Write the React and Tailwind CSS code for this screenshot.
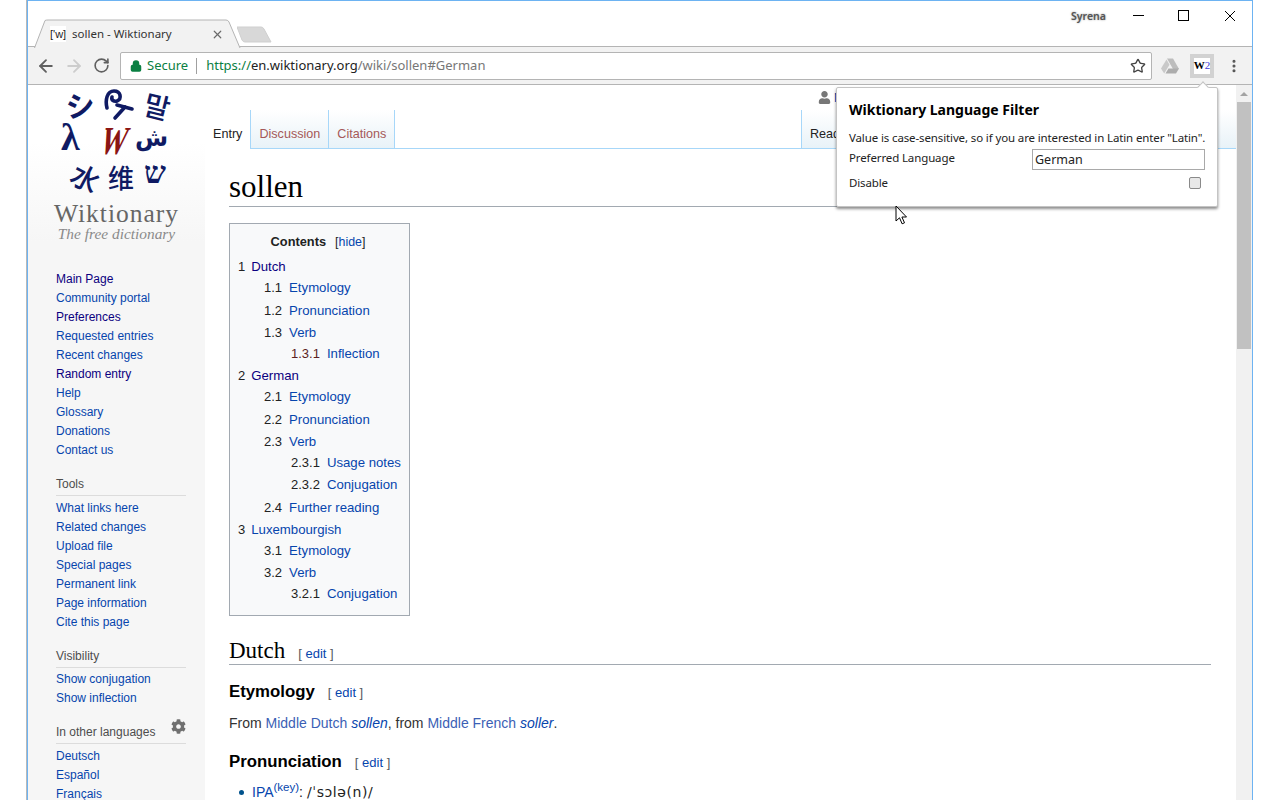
import React from "react";
import { ArrowLeft, ArrowRight, RotateCw, Lock, Star, X, EllipsisVertical } from "lucide-react";
import { FaUser, FaCog } from "react-icons/fa";

const uiFont = "font-['Noto_Sans',sans-serif]";

const sidebarMain = [
  ["Main Page", "#0b0080"],
  ["Community portal", "#0645ad"],
  ["Preferences", "#0b0080"],
  ["Requested entries", "#0645ad"],
  ["Recent changes", "#0645ad"],
  ["Random entry", "#0b0080"],
  ["Help", "#0645ad"],
  ["Glossary", "#0645ad"],
  ["Donations", "#0645ad"],
  ["Contact us", "#0645ad"],
];
const sidebarTools = ["What links here", "Related changes", "Upload file", "Special pages", "Permanent link", "Page information", "Cite this page"];
const sidebarVisibility = ["Show conjugation", "Show inflection"];
const sidebarLangs = ["Deutsch", "Español", "Français"];

// level, number, label, visited, row height
const toc = [
  [0, "1", "Dutch", true, "h-[21px]"],
  [1, "1.1", "Etymology", false, "h-[23px]"],
  [1, "1.2", "Pronunciation", false, "h-[22px]"],
  [1, "1.3", "Verb", false, "h-[21px]"],
  [2, "1.3.1", "Inflection", false, "h-[22px]"],
  [0, "2", "German", true, "h-[21px]"],
  [1, "2.1", "Etymology", false, "h-[23px]"],
  [1, "2.2", "Pronunciation", false, "h-[22px]"],
  [1, "2.3", "Verb", false, "h-[21px]"],
  [2, "2.3.1", "Usage notes", false, "h-[22px]"],
  [2, "2.3.2", "Conjugation", false, "h-[23px]"],
  [1, "2.4", "Further reading", false, "h-[22px]"],
  [0, "3", "Luxembourgish", false, "h-[21px]"],
  [1, "3.1", "Etymology", false, "h-[22px]"],
  [1, "3.2", "Verb", false, "h-[21px]"],
  [2, "3.2.1", "Conjugation", false, "h-[20px]"],
];

const SideLink = ({ children, color = "#0645ad" }) => (
  <li className="h-[19px] leading-[19px]" style={{ color }}>{children}</li>
);

const SideHead = ({ children }) => (
  <div className="mr-[19px] h-[22px] border-b border-[#dcdcdc] leading-[20px] text-[#4d4d4d]">{children}</div>
);

const Edit = () => (
  <span className="ml-[13px] align-baseline text-[13px] font-normal text-[#54595d]">
    [ <span className="text-[#0645ad]">edit</span> ]
  </span>
);

const Logo = () => (
  <svg width="177" height="160" viewBox="0 0 177 160" className="block">
    <g fill="#0f1a63" fontFamily="'Noto Sans CJK JP', sans-serif" fontWeight="700">
      <text transform="translate(39 33) rotate(-6)" fontSize="29">シ</text>
      <g fill="none" stroke="#0f1a63" strokeWidth="3.6" strokeLinecap="round">
        <path d="M79 23C77 15 79 6 86 6C93 6 94 14 89 16C86 17 83 15 84 12" />
        <path d="M89 20l15 4" />
        <path d="M97 22l-10 11" />
      </g>
      <text transform="translate(114 29) rotate(14)" fontSize="28" fontFamily="'Noto Sans CJK KR', sans-serif" fontWeight="500">말</text>
      <text x="33" y="65" fontSize="38" fontFamily="'Liberation Serif', serif" fontWeight="700">λ</text>
      <text transform="translate(70 69) skewX(-16) scale(0.72 1.1)" fontSize="36" fontFamily="'Liberation Serif', serif" fontWeight="700" fill="#8b1513">W</text>
      <text x="107" y="61" fontSize="24" fontFamily="'DejaVu Sans', sans-serif" fontWeight="700">ش</text>
      <text transform="translate(40 96) rotate(28)" fontSize="28" fontWeight="500">水</text>
      <text x="80" y="103" fontSize="26" fontFamily="'Noto Sans CJK SC', sans-serif" fontWeight="500">维</text>
      <text x="116" y="98" fontSize="31" fontFamily="'Liberation Serif', serif" fontWeight="700">ש</text>
    </g>
    <text x="88.5" y="137" textAnchor="middle" fontFamily="'Liberation Serif', serif" fontSize="25.5" fill="#666" letterSpacing="1">Wiktionary</text>
    <text x="88.5" y="154" textAnchor="middle" fontFamily="'Liberation Serif', serif" fontStyle="italic" fontSize="15.4" fill="#8a8a8a">The free dictionary</text>
  </svg>
);

const Sidebar = () => (
  <div className="relative w-[177px] shrink-0 bg-gradient-to-b from-white from-[8%] to-[#f6f6f6] to-[22%] font-['Liberation_Sans',sans-serif] text-[12px]">
    <div className="absolute inset-x-0 top-[160px] bottom-0 bg-[#f6f6f6]" />
    <div className="relative">
      <Logo />
      <div className="pl-[28px] pt-[25px]">
        <ul>
          {sidebarMain.map(([t, c]) => <SideLink key={t} color={c}>{t}</SideLink>)}
        </ul>
        <div className="mt-[14px]">
          <SideHead>Tools</SideHead>
          <ul className="mt-[3px]">{sidebarTools.map((t) => <SideLink key={t}>{t}</SideLink>)}</ul>
        </div>
        <div className="mt-[14px]">
          <SideHead>Visibility</SideHead>
          <ul className="mt-[2px]">{sidebarVisibility.map((t) => <SideLink key={t}>{t}</SideLink>)}</ul>
        </div>
        <div className="relative mt-[14px]">
          <SideHead>In other languages</SideHead>
          <FaCog className="absolute right-[19px] top-[-3px] text-[15px] text-[#707070]" />
          <ul className="mt-[3px]">{sidebarLangs.map((t) => <SideLink key={t}>{t}</SideLink>)}</ul>
        </div>
      </div>
    </div>
  </div>
);

const Toc = () => (
  <div className="w-[181px] border border-[#a2a9b1] bg-[#f8f9fa] pl-[8px] pt-[7px] text-[13px] text-[#222]">
    <div className="flex h-[22px] justify-center gap-[9px] pr-[11px] leading-[22px]">
      <b className="text-[12.8px]">Contents</b>
      <span className="text-[12.4px]">[<span className="text-[#0645ad]">hide</span>]</span>
    </div>
    <div className="pb-[11px] pt-[4px]">
      {toc.map(([level, num, label, visited, height]) => (
        <div
          key={num}
          className={`${height} whitespace-nowrap leading-[20px] ${level === 1 ? "pl-[26px]" : level === 2 ? "pl-[53px]" : ""}`}
        >
          <span className={num === "1.3.1" ? "text-[#5c1f1f]" : ""}>{num}</span>
          <span className={`text-[13.2px] ${level === 0 ? "ml-[6px]" : "ml-[7px]"} ${visited ? "text-[#0b0080]" : "text-[#0645ad]"}`}>{label}</span>
        </div>
      ))}
    </div>
  </div>
);

const Article = () => (
  <div className="relative min-w-0 flex-1 overflow-hidden bg-white font-['Liberation_Sans',sans-serif]">
    {/* personal bar and search edge, mostly hidden by the popup */}
    <span className="absolute left-[1009px] top-[12px] h-[9px] w-[2px] bg-[#0645ad]" />
    <span className="absolute left-[1010px] top-[34px] h-[26px] w-[1px] bg-[#aaaaaa]" />
    <div className="flex h-[25px] items-center pl-[613px] text-[12px] text-[#0645ad]">
      <FaUser className="mr-[3px] text-[13px] text-[#777]" />
      <span>N</span>
    </div>
    <div className="flex h-[39px] justify-between text-[12.6px]">
      <div className="flex flex-1 border-b border-[#a7d7f9]">
        <div className="flex bg-gradient-to-b from-white to-[#e8f2f8]">
          <div className="-mb-px border-r border-[#a7d7f9] bg-white pl-[8px] pr-[8px] pt-[15px] text-[#222]">Entry</div>
          <div className="border-r border-[#a7d7f9] px-[8px] pt-[15px] text-[#a55858]">Discussion</div>
          <div className="border-r border-[#a7d7f9] px-[8px] pt-[15px] text-[#a55858]">Citations</div>
        </div>
        <div className="flex-1" />
        <div className="w-[435px] border-l border-[#a7d7f9] bg-gradient-to-b from-white to-[#e8f2f8] pl-[8px] pt-[15px] text-[#222]">Read</div>
      </div>
    </div>
    <div className="pl-[24px] pr-[25px]">
      <h1 className="mt-[18px] h-[40px] border-b border-[#a2a9b1] font-['Liberation_Serif',serif] text-[31px] leading-[40px] text-black">sollen</h1>
      <div className="mt-[16px]"><Toc /></div>
      <h2 className="mt-[19px] h-[30px] border-b border-[#a2a9b1] font-['Liberation_Serif',serif] text-[23px] leading-[30px] text-black">
        Dutch<span className="font-['Liberation_Sans',sans-serif]"><Edit /></span>
      </h2>
      <h3 className="mt-[14px] text-[16.8px] font-bold leading-[26px] text-black">Etymology<Edit /></h3>
      <p className="mt-[6px] text-[14px] leading-[22px] text-[#333]">
        From <span className="text-[#3b5fb5]">Middle Dutch</span> <i className="text-[#0645ad]">sollen</i>, from <span className="text-[#3b5fb5]">Middle French</span> <i className="text-[#0645ad]">soller</i>.
      </p>
      <h3 className="mt-[15px] text-[16.8px] font-bold leading-[26px] text-black">Pronunciation<Edit /></h3>
      <ul className="mt-[5px] pl-[23px] text-[14px] leading-[22px] text-[#222]">
        <li className="relative">
          <span className="absolute left-[-13px] top-[9px] h-[5px] w-[5px] rounded-full bg-[#00528c]" />
          <span className="text-[#0645ad]">IPA</span>
          <sup className="text-[11.5px] text-[#0645ad]">(key)</sup>: <span className="font-['DejaVu_Sans',sans-serif] tracking-[0.6px] text-[#222]">/ˈsɔlə(n)/</span>
        </li>
      </ul>
    </div>
  </div>
);

const Popup = () => (
  <div className={`absolute left-[808px] top-[2px] z-10 h-[120px] w-[382px] rounded-[2px] border border-[#c4c4c4] bg-white pl-[12px] pr-[12px] pt-[12px] text-[11.5px] tracking-[-0.125px] text-[#222] shadow-[0_2px_3px_rgba(0,0,0,0.45)] ${uiFont}`}>
    <span className="absolute right-[10px] top-[-5px] h-[8px] w-[8px] rotate-45 border-l border-t border-[#c4c4c4] bg-white" />
    <div className="text-[14px] font-bold leading-[20px] tracking-normal text-black">Wiktionary Language Filter</div>
    <div className="mt-[10px] whitespace-nowrap leading-[16px]">Value is case-sensitive, so if you are interested in Latin enter "Latin".</div>
    <div className="mt-[5px] flex justify-between">
      <span className="leading-[14px]">Preferred Language</span>
      <span className="-mt-[2px] h-[21px] w-[173px] border border-[#a9a9a9] pl-[2px] text-[12.5px] leading-[19px] tracking-normal">German</span>
    </div>
    <div className="mt-[3px] flex justify-between pr-[4px]">
      <span className="leading-[20px]">Disable</span>
      <span className="mt-[4px] h-[12px] w-[12px] rounded-[2px] border border-[#8a8a8a] bg-[#e8e8e8]" />
    </div>
  </div>
);

const Scrollbar = () => (
  <div className="flex w-[16px] shrink-0 flex-col items-center bg-[#f1f1f1]">
    <div className="mt-[7px] h-0 w-0 border-x-[4px] border-b-[4px] border-x-transparent border-b-[#a3a3a3]" />
    <div className="mt-[6px] h-[247px] w-[14px] bg-[#c1c1c1]" />
  </div>
);

const Chrome = () => (
  <div className={`relative ${uiFont}`}>
    <div className="relative h-[46px] bg-white">
      <div className="absolute bottom-0 left-0 h-px w-full bg-[#b4b4b4]" />
      {/* tab shape */}
      <svg width="240" height="30" viewBox="0 0 240 30" className="absolute left-0 top-[17px]">
        <path d="M6.5 30 L17 2.5 Q18 2 20 2 L198 2 Q200 2 201 4 L212 30" fill="#f2f2f2" stroke="#b4b4b4" />
      </svg>
      <svg width="40" height="20" viewBox="0 0 40 20" className="absolute left-[209px] top-[25px]">
        <path d="M0 1 H24 Q26 1 27 3 L34 16 H8 Q6 16 5 14 Z" fill="#d8d8d8" stroke="#cfcfcf" />
      </svg>
      <div className="absolute left-[22px] top-[25px] flex h-[16px] items-center text-[11.5px] text-[#333]">
        <span className="w-[16px] bg-white text-center font-['Liberation_Sans',sans-serif] text-[11px] text-[#222]">['w]</span>
        <span className="ml-[6px]">sollen - Wiktionary</span>
      </div>
      <X size={13} strokeWidth={2.2} className="absolute left-[183px] top-[27px] text-[#6a6a6a]" />
      <div className="absolute left-[1043px] top-[8px] text-[10.5px] font-semibold text-[#555] [text-shadow:0_0_2px_#999]">Syrena</div>
      <span className="absolute left-[1105px] top-[14px] h-px w-[11px] bg-black" />
      <span className="absolute left-[1150px] top-[9px] h-[11px] w-[11px] border border-black" />
      <svg width="12" height="12" viewBox="0 0 12 12" className="absolute left-[1196px] top-[9px]">
        <path d="M1 1l10 10M11 1L1 11" stroke="#000" strokeWidth="1" />
      </svg>
    </div>
    <div className="flex h-[38px] items-center border-b border-[#b4b4b4] bg-[#f2f2f2] pl-[8px]">
      <ArrowLeft size={20} strokeWidth={2.2} className="text-[#606060]" />
      <ArrowRight size={20} strokeWidth={2.2} className="ml-[8px] text-[#cdcdcd]" />
      <RotateCw size={17} strokeWidth={2.3} className="ml-[9px] text-[#606060]" />
      <div className="ml-[10px] flex h-[28px] w-[1032px] items-center rounded-[2px] border border-[#b4b4b4] bg-white pl-[9px] text-[13px]">
        <Lock size={12} strokeWidth={3} className="fill-[#0b8043] text-[#0b8043]" />
        <span className="ml-[5px] text-[#0b8043]">Secure</span>
        <span className="ml-[8px] mr-[9px] h-[16px] w-px bg-[#a0a0a0]" />
        <span className="text-[#0b8043]">https://</span>
        <span className="text-[#222]">en.wiktionary.org</span>
        <span className="text-[#777]">/wiki/sollen#German</span>
        <Star size={16} strokeWidth={2} className="ml-auto mr-[5px] text-[#444]" />
      </div>
      <svg width="18" height="16" viewBox="0 0 18 16" className="ml-[9px]">
        <path d="M6 0.5h6l6 10.5h-6z" fill="#bdbdbd" />
        <path d="M5.5 1.5l3 5.2-5.3 8.8L0 10.5z" fill="#c9c9c9" />
        <path d="M4.5 15.5l3-5h10.5l-3 5z" fill="#adadad" />
      </svg>
      <div className="ml-[11px] flex h-[24px] w-[24px] items-center justify-center bg-[#d2d2d2]">
        <span className="flex h-[16px] w-[16px] items-center justify-center bg-white font-['Liberation_Serif',serif] text-[11px] font-bold text-black">W<span className="font-normal text-[#3a3ad8]">2</span></span>
      </div>
      <EllipsisVertical size={16} strokeWidth={2.6} className="ml-[12px] text-[#555]" />
    </div>
  </div>
);

const Cursor = () => (
  <svg width="13" height="20" viewBox="0 0 13 20" className="absolute left-[867px] top-[120px] z-20">
    <path d="M1 1v15l3.5-3.2 2.6 6 2.4-1-2.6-5.8h4.6z" fill="#fff" stroke="#000" strokeWidth="1" />
  </svg>
);

export default function App() {
  return (
    <div className="flex h-[800px] w-[1280px] overflow-hidden bg-white">
      <div className="w-[26px] shrink-0" />
      <div className="w-px shrink-0 bg-[#b9b9b9]" />
      <div className="flex w-[1226px] shrink-0 flex-col border-x border-t border-[#6db3f2]">
        <Chrome />
        <div className="relative flex min-h-0 flex-1">
          <Sidebar />
          <div className="flex min-w-0 flex-1 flex-col">
            <div className="relative flex min-h-0 flex-1">
              <Article />
              <Scrollbar />
            </div>
          </div>
          <Popup />
          <Cursor />
        </div>
      </div>
    </div>
  );
}
